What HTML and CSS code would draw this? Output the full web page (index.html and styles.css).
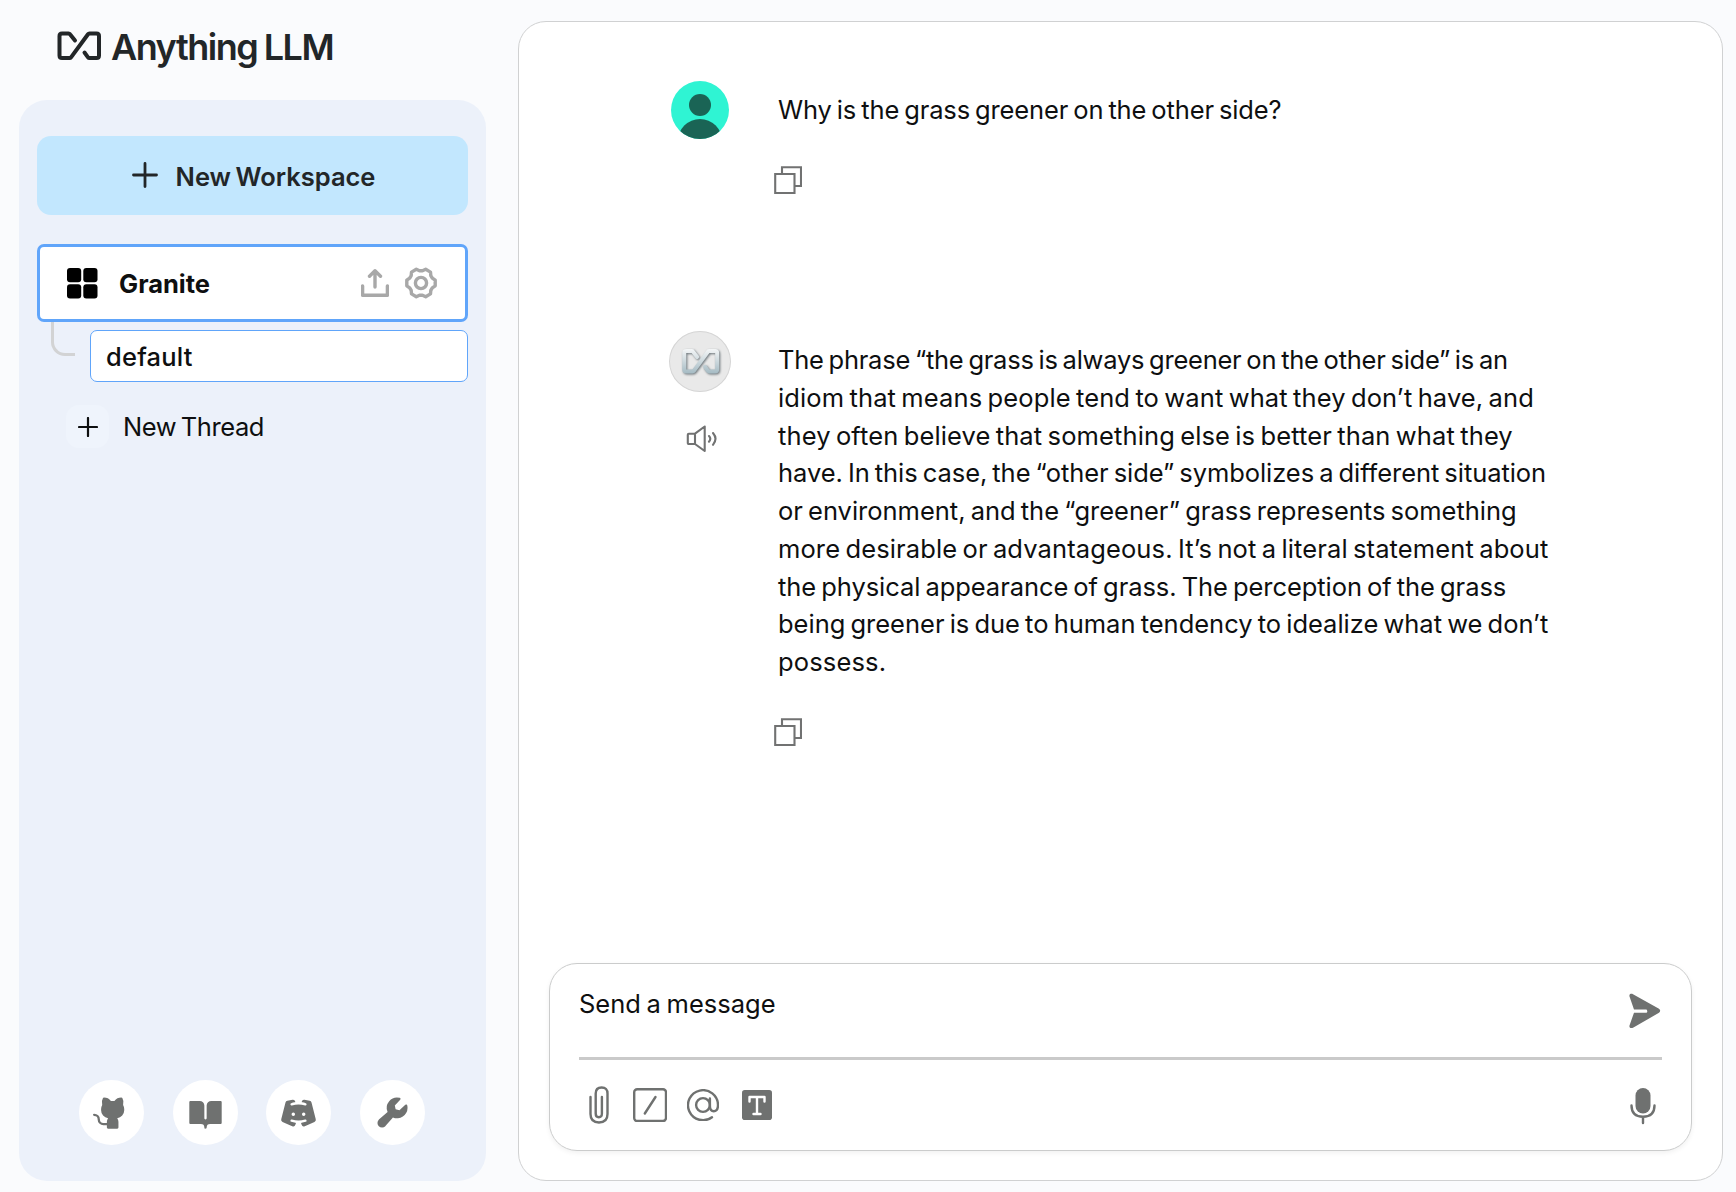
FILE: index.html
```html
<!DOCTYPE html>
<html lang="en">
<head>
<meta charset="utf-8">
<title>Anything LLM</title>
<link rel="stylesheet" href="styles.css">
</head>
<body>
<aside class="side">
  <header class="brand">
    <svg class="brand-mark" width="44" height="30" viewBox="0 0 44 30"><path d="M18 9.500 13 3.200Q12.500 2.500 11.500 2.500H5Q2.500 2.500 2.500 5V24.500Q2.500 27 5 27H12.500Q13.500 27 14 26.300L31 3.200Q31.500 2.500 32.500 2.500H39.500Q42 2.500 42 5V24.500Q42 27 39.500 27H32.500Q31.500 27 31 26.300L27.500 21.500"/></svg>
    <span class="brand-name">Anything LLM</span>
  </header>
  <nav class="panel">
    <button class="new-ws"><svg width="26" height="26" viewBox="0 0 26 26"><path d="M13 1.500V24.500M1.500 13H24.500"/></svg><span>New Workspace</span></button>
    <div class="workspace">
      <svg width="31" height="31" viewBox="0 0 31 31"><rect width="14.200" height="14.200" rx="3"/><rect x="16.300" width="14.200" height="14.200" rx="3"/><rect y="16.300" width="14.200" height="14.200" rx="3"/><rect x="16.300" y="16.300" width="14.200" height="14.200" rx="3"/></svg>
      <span class="ws-name">Granite</span>
      <svg class="tool" width="28" height="28" viewBox="0 0 28 28"><path d="M1.600 17V26.300H26.400V17M14 18V2M8.500 7.300 14 1.800 19.500 7.300"/></svg>
      <svg class="tool gear" width="34" height="32" viewBox="-17 -16 34 32"><circle r="5.600"/><path d="M1.500-12.200 4.700-13.700 9.500-10.900 9.800-7.400 11.300-4.800 14.200-2.800V2.800L11.300 4.800 9.800 7.400 9.500 10.900 4.700 13.700 1.500 12.200H-1.500L-4.700 13.700-9.500 10.900-9.800 7.400-11.300 4.800-14.200 2.800V-2.800L-11.300-4.800-9.800-7.400-9.500-10.900-4.700-13.700-1.500-12.200Z"/></svg>
    </div>
    <div class="thread-row"><span class="branch"></span><div class="thread">default</div></div>
    <div class="new-thread"><span class="plus-box"><svg width="20" height="20" viewBox="0 0 20 20"><path d="M10 1V19M1 10H19"/></svg></span><span>New Thread</span></div>
    <footer class="links">
      <a><svg width="37" height="37" viewBox="0 0 256 256"><path d="M216,104v8a56.060,56.060,0,0,1-48.440,55.470A39.800,39.800,0,0,1,176,192v40a8,8,0,0,1-8,8H104a8,8,0,0,1-8-8V216H72a40,40,0,0,1-40-40A24,24,0,0,0,8,152a8,8,0,0,1,0-16,40,40,0,0,1,40,40,24,24,0,0,0,24,24H96v-8a39.800,39.800,0,0,1,8.440-24.530A56.060,56.060,0,0,1,56,112v-8a58.140,58.140,0,0,1,7.690-28.320A59.780,59.780,0,0,1,69.070,28,8,8,0,0,1,76,24a59.750,59.750,0,0,1,48,24h24a59.750,59.750,0,0,1,48-24,8,8,0,0,1,6.930,4,59.740,59.740,0,0,1,5.370,47.680A58,58,0,0,1,216,104Z"/></svg></a>
      <a><svg width="37" height="37" viewBox="0 0 256 256"><path d="M240,56V200a8,8,0,0,1-8,8H160a24,24,0,0,0-24,23.940,7.900,7.900,0,0,1-5.120,7.550A8,8,0,0,1,120,232a24,24,0,0,0-24-24H24a8,8,0,0,1-8-8V56a8,8,0,0,1,8-8H88a32,32,0,0,1,32,32v87.730a8.170,8.170,0,0,0,7.470,8.250,8,8,0,0,0,8.530-8V80a32,32,0,0,1,32-32h64A8,8,0,0,1,240,56Z"/></svg></a>
      <a><svg width="37" height="37" viewBox="0 0 256 256"><path d="M247.510,174.390,218,58a16.080,16.080,0,0,0-13-11.880l-36.060-5.920a16.220,16.220,0,0,0-18.260,11.880l-.21.85a4,4,0,0,0,3.270,4.930,155.620,155.620,0,0,1,24.410,5.620,8.200,8.200,0,0,1,5.620,9.700,8,8,0,0,1-10.190,5.640,155.400,155.400,0,0,0-90.800-.1,8.220,8.220,0,0,1-10.280-4.810,8,8,0,0,1,5.080-10.330,156.850,156.850,0,0,1,24.720-5.720,4,4,0,0,0,3.270-4.930l-.21-.85A16.210,16.210,0,0,0,87.080,40.210L51,46.130A16.080,16.080,0,0,0,38,58L8.490,174.390a15.940,15.940,0,0,0,9.060,18.510l67,29.710a16.170,16.170,0,0,0,21.710-9.100l3.490-9.450a4,4,0,0,0-3.270-5.350,158.130,158.130,0,0,1-28.630-6.200,8.200,8.200,0,0,1-5.610-9.670,8,8,0,0,1,10.200-5.660,155.590,155.590,0,0,0,91.120,0,8,8,0,0,1,10.190,5.650,8.190,8.190,0,0,1-5.610,9.680,157.840,157.840,0,0,1-28.620,6.200,4,4,0,0,0-3.270,5.350l3.490,9.450a16.180,16.180,0,0,0,21.710,9.100l67-29.710A15.940,15.940,0,0,0,247.510,174.390ZM92,152a12,12,0,1,1,12-12A12,12,0,0,1,92,152Zm72,0a12,12,0,1,1,12-12A12,12,0,0,1,164,152Z"/></svg></a>
      <a><svg width="37" height="37" viewBox="0 0 256 256"><path d="M232,96a72,72,0,0,1-100.940,66L79,222.220c-.12.140-.26.290-.39.420a32,32,0,0,1-45.260-45.260c.14-.13.280-.27.430-.39L94,124.940a72.070,72.070,0,0,1,83.540-98.780,8,8,0,0,1,3.930,13.190L144,80l5.660,26.350L176,112l40.650-37.520a8,8,0,0,1,13.190,3.930A72.600,72.600,0,0,1,232,96Z"/></svg></a>
    </footer>
  </nav>
</aside>
<main class="chat">
  <section class="messages">
    <article class="message user">
      <div class="who">
        <svg class="avatar" width="58" height="58" viewBox="0 0 58 58"><clipPath id="disc"><circle cx="29" cy="29" r="29"/></clipPath><g clip-path="url(#disc)"><rect width="58" height="58" fill="#2ff4d3"/><g fill="#1a6455"><circle cx="29" cy="24" r="11"/><circle cx="29" cy="60.200" r="22.200"/></g></g></svg>
      </div>
      <div class="body">
        <p><span class="line q">Why is the grass greener on the other side?</span></p>
        <svg class="copy" width="28" height="28" viewBox="0 0 28 28"><path d="M1.200 8H20.500V27H1.200ZM8 8V1.200H27V20H20.500"/></svg>
      </div>
    </article>
    <article class="message">
      <div class="who">
        <div class="bot"><svg width="44" height="30" viewBox="0 0 44 30"><defs><linearGradient id="steel" gradientUnits="userSpaceOnUse" x1="0" y1="0" x2="0" y2="30"><stop offset="0" stop-color="#f4f6f7"/><stop offset="1" stop-color="#a3b9c2"/></linearGradient></defs><path stroke="url(#steel)" d="M18 9.500 13 3.200Q12.500 2.500 11.500 2.500H5Q2.500 2.500 2.500 5V24.500Q2.500 27 5 27H12.500Q13.500 27 14 26.300L31 3.200Q31.500 2.500 32.500 2.500H39.500Q42 2.500 42 5V24.500Q42 27 39.500 27H32.500Q31.500 27 31 26.300L27.500 21.500"/></svg></div>
        <svg class="speaker" width="32" height="28" viewBox="0 0 32 28"><path d="M2.800 8.700H9L18.700 1.500V26L9 19H2.800Q1.800 19 1.800 18V9.700Q1.800 8.700 2.800 8.700ZM9 8.700V19M23 11Q25.600 13.800 23 16.700M27 8Q32 13.800 27 19.800"/></svg>
      </div>
      <div class="body">
        <p>
          <span class="line a1">The phrase “the grass is always greener on the other side” is an</span>
          <span class="line a2">idiom that means people tend to want what they don’t have, and</span>
          <span class="line a2">they often believe that something else is better than what they</span>
          <span class="line a4">have. In this case, the “other side” symbolizes a different situation</span>
          <span class="line a5">or environment, and the “greener” grass represents something</span>
          <span class="line a2">more desirable or advantageous. It’s not a literal statement about</span>
          <span class="line a4">the physical appearance of grass. The perception of the grass</span>
          <span class="line a5">being greener is due to human tendency to idealize what we don’t</span>
          <span class="line a9">possess.</span>
        </p>
        <svg class="copy" width="28" height="28" viewBox="0 0 28 28"><path d="M1.200 8H20.500V27H1.200ZM8 8V1.200H27V20H20.500"/></svg>
      </div>
    </article>
  </section>
  <form class="prompt">
    <div class="entry">
      <span>Send a message</span>
      <svg width="32" height="36" viewBox="0 0 32 36"><path d="M.6 3.700C-.3 1.300 2 .2 4 1.300L30 15.800Q32.400 17.800 30 19.800L4 34.700C2 35.800-.3 34.600.6 32.200L5 19.700H17.500Q18.300 19.500 18.300 18.500T17.500 16.500H5Z"/></svg>
    </div>
    <div class="tools">
      <svg class="clip" width="20" height="38" viewBox="0 0 20 38"><path d="M1.500 11V28Q1.500 36.500 10 36.500T18.500 28V7.500Q18.500 1.500 12.600 1.500T6.700 7.500V27.500Q6.700 31.200 9.800 31.200T12.900 27.500V11"/></svg>
      <svg class="slash" width="34" height="34" viewBox="0 0 34 34"><rect x="1.200" y="1.200" width="31.800" height="31.800" rx="3"/><path d="M11.800 25.500 22.500 9"/></svg>
      <svg class="at" width="32" height="32" viewBox="0 0 32 32"><circle cx="16" cy="16" r="6.900"/><path d="M22.900 9.500V17Q23 22.200 26.800 22.200 31 22.200 31 16A15 15 0 1 0 25 28.200"/></svg>
      <svg class="type" width="30" height="30" viewBox="0 0 30 30"><rect width="30" height="30" rx="2.800"/><path d="M7.500 11.500V7H22.500V11.500M15 7V24M11.500 24H18.500"/></svg>
      <svg class="mic" width="26" height="37" viewBox="0 0 26 37"><rect x="5.500" width="15" height="25.500" rx="7.500"/><path d="M1.500 17.500Q1.500 28.700 13 28.700T24.500 17.500M13 28.700V35"/></svg>
    </div>
  </form>
</main>
</body>
</html>
```
FILE: styles.css
```css
* { box-sizing: border-box; }
body {
  margin: 0;
  height: 1192px;
  display: flex;
  padding: 0 13px 11px 19px;
  gap: 32px;
  background: #fafbfd;
  color: #0e0f10;
  font: 25.5px/37.78px Inter, "Liberation Sans", sans-serif;
  overflow: hidden;
}
svg { display: block; flex: none; }

/* Sidebar */
.side { width: 467px; display: flex; flex-direction: column; }
.brand { height: 100px; padding: 0 0 7px 38px; display: flex; align-items: center; gap: 10px; color: #222628; }
.brand-mark { margin-bottom: 2px; }
.brand-mark path { fill: none; stroke: #222628; stroke-width: 4; stroke-linecap: round; }
.brand-name { padding-top: 2px; font-size: 36px; font-weight: 600; letter-spacing: -1.5px; word-spacing: -1px; }
.panel {
  flex: 1;
  display: flex;
  flex-direction: column;
  padding: 36px 18px;
  border-radius: 28px;
  background: #ecf1fa;
}
.new-ws {
  height: 79px;
  border: 0;
  border-radius: 14px;
  background: #c2e7fe;
  color: #222628;
  font: inherit;
  font-weight: 600;
  word-spacing: -2px;
  display: flex;
  align-items: center;
  justify-content: center;
  gap: 18px;
  padding: 2px 0 0 2px;
}
.new-ws svg { fill: none; stroke: #222628; stroke-width: 2.8; stroke-linecap: round; margin-bottom: 3px; }
.workspace {
  height: 78px;
  margin-top: 29px;
  padding: 0 28px 0 27px;
  display: flex;
  align-items: center;
  border: 3px solid #60a5fa;
  border-radius: 7px;
  background: #fff;
}
.ws-name { flex: 1; margin-left: 21px; padding-top: 2px; font-weight: 700; }
.tool { fill: none; stroke: #a8a8a8; stroke-width: 3.4; stroke-linejoin: round; stroke-linecap: round; }
.gear { margin-left: 15px; margin-right: -1px; }
.thread-row { display: flex; height: 60px; }
.branch {
  width: 24px;
  height: 34px;
  margin: 0 15px 0 14px;
  border: solid #d2d3d4;
  border-width: 0 0 3px 3px;
  border-bottom-left-radius: 14px;
}
.thread {
  flex: 1;
  height: 52px;
  margin-top: 8px;
  padding: 8px 15px;
  border: 1px solid #60a5fa;
  border-radius: 7px;
  background: #fff;
  font-weight: 500;
  line-height: 36px;
  letter-spacing: .2px;
}
.new-thread { display: flex; align-items: center; gap: 14px; margin: 23px 0 0 29px; letter-spacing: -.45px; word-spacing: -2px; }
.plus-box { width: 43px; height: 43px; border-radius: 13px; background: #eff4fc; display: grid; place-items: center; }
.plus-box svg { fill: none; stroke: #0e0f10; stroke-width: 2.2; stroke-linecap: round; }
.links { margin: auto 0 0 42px; display: flex; gap: 28.7px; }
.links a { width: 65px; height: 65px; border-radius: 50%; background: #fff; display: grid; place-items: center; }
.links svg { fill: #6f7170; }

/* Conversation */
.chat {
  flex: 1;
  margin-top: 21px;
  display: flex;
  flex-direction: column;
  border: 1px solid #d0d1d2;
  border-radius: 28px;
  background: #fff;
  padding: 0 30px 29px;
}
.messages { flex: 1; padding: 59px 0 0 120px; }
.message { display: grid; grid-template-columns: 62px 1fr; column-gap: 47px; }
.user { height: 250px; }
.avatar { margin-left: 2px; }
.bot {
  width: 62px;
  height: 61px;
  border: 1px solid #d5d5d5;
  border-radius: 50%;
  background: #e9e9e9;
  display: grid;
  place-items: center;
}
.bot svg { width: 37px; height: 25px; fill: none; stroke-width: 4.8; stroke-linecap: round; overflow: visible; filter: drop-shadow(1px 1px 1.2px #6c757a); }
.speaker { margin: 33px 0 0 17px; fill: none; stroke: #717272; stroke-width: 2.1; stroke-linecap: round; stroke-linejoin: round; }
.body { padding-top: 10px; }
.body p { margin: 0; }
.line { display: block; white-space: nowrap; word-spacing: -2px; }
.q { letter-spacing: -.13px; }
.a1 { letter-spacing: -.25px; }
.a2 { letter-spacing: .12px; }
.a4 { letter-spacing: -.06px; }
.a5 { letter-spacing: -.01px; }
.a9 { letter-spacing: .15px; }
.copy { margin: 37px 0 0 -4px; fill: none; stroke: #717272; stroke-width: 2.1; }

/* Prompt box */
.prompt {
  height: 188px;
  padding: 0 29px;
  border: 1px solid #cbcccc;
  border-radius: 28px;
  box-shadow: 0 2px 5px rgba(0, 0, 0, .06);
}
.entry { height: 96px; display: flex; justify-content: space-between; padding: 21px 1px 0 0; border-bottom: 3px solid #cacaca; word-spacing: -1.5px; }
.entry svg { fill: #6f7170; margin-top: 8px; }
.tools { height: 90px; display: flex; align-items: center; padding-left: 10px; fill: none; stroke: #6f7170; stroke-width: 2.4; stroke-linecap: round; stroke-linejoin: round; }
.slash { margin-left: 24px; }
.at { margin-left: 20px; }
.type { margin-left: 23px; }
.type rect { fill: #6f7170; stroke: none; }
.type path { stroke: #fff; }
.mic { margin: 2px 6px 0 auto; }
.mic rect { fill: #6f7170; stroke: none; }
```
